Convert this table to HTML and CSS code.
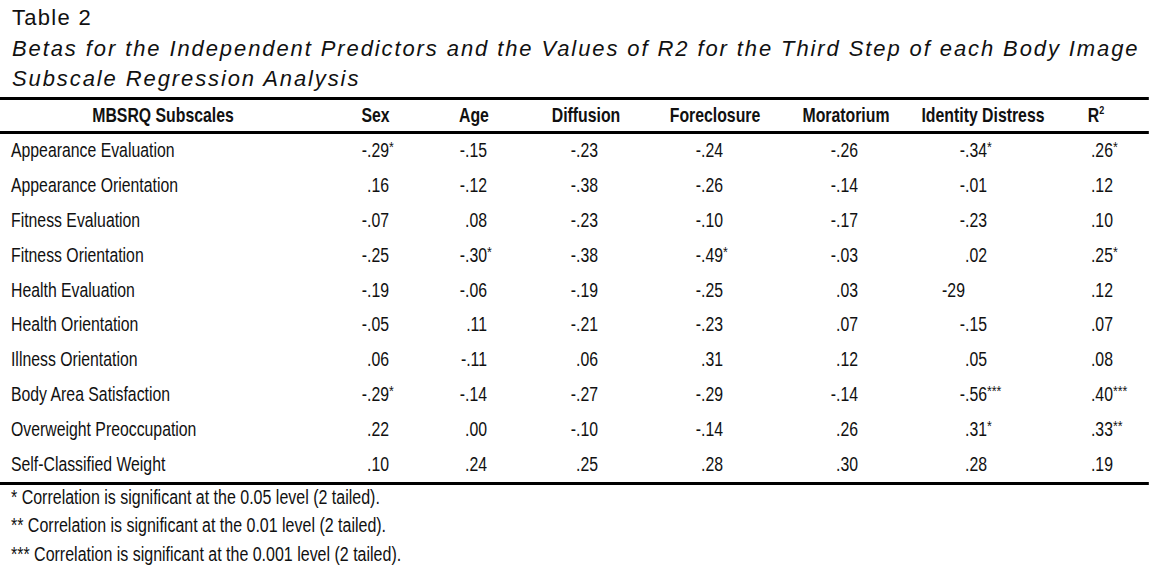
FILE: index.html
```html
<!DOCTYPE html>
<html>
<head>
<meta charset="utf-8">
<link rel="stylesheet" href="styles.css">
</head>
<body>
<div class="page">
  <div class="caption">
    <div class="tnum">Table 2</div>
    <div class="ttitle">Betas for the Independent Predictors and the Values of R2 for the Third Step of each Body Image Subscale Regression Analysis</div>
  </div>
  <div class="table">
    <div class="row head">
      <div class="c">MBSRQ Subscales</div>
      <div class="c">Sex</div>
      <div class="c">Age</div>
      <div class="c">Diffusion</div>
      <div class="c">Foreclosure</div>
      <div class="c">Moratorium</div>
      <div class="c">Identity Distress</div>
      <div class="c">R<sup>2</sup></div>
    </div>
    <div class="body">
      <div class="row"><div class="c">Appearance Evaluation</div><div class="c">-.29<span class="s">*</span></div><div class="c">-.15</div><div class="c">-.23</div><div class="c">-.24</div><div class="c">-.26</div><div class="c">-.34<span class="s">*</span></div><div class="c">.26<span class="s">*</span></div></div>
      <div class="row"><div class="c">Appearance Orientation</div><div class="c">.16</div><div class="c">-.12</div><div class="c">-.38</div><div class="c">-.26</div><div class="c">-.14</div><div class="c">-.01</div><div class="c">.12</div></div>
      <div class="row"><div class="c">Fitness Evaluation</div><div class="c">-.07</div><div class="c">.08</div><div class="c">-.23</div><div class="c">-.10</div><div class="c">-.17</div><div class="c">-.23</div><div class="c">.10</div></div>
      <div class="row"><div class="c">Fitness Orientation</div><div class="c">-.25</div><div class="c">-.30<span class="s">*</span></div><div class="c">-.38</div><div class="c">-.49<span class="s">*</span></div><div class="c">-.03</div><div class="c">.02</div><div class="c">.25<span class="s">*</span></div></div>
      <div class="row"><div class="c">Health Evaluation</div><div class="c">-.19</div><div class="c">-.06</div><div class="c">-.19</div><div class="c">-.25</div><div class="c">.03</div><div class="c shifted">-29</div><div class="c">.12</div></div>
      <div class="row"><div class="c">Health Orientation</div><div class="c">-.05</div><div class="c">.11</div><div class="c">-.21</div><div class="c">-.23</div><div class="c">.07</div><div class="c">-.15</div><div class="c">.07</div></div>
      <div class="row"><div class="c">Illness Orientation</div><div class="c">.06</div><div class="c">-.11</div><div class="c">.06</div><div class="c">.31</div><div class="c">.12</div><div class="c">.05</div><div class="c">.08</div></div>
      <div class="row"><div class="c">Body Area Satisfaction</div><div class="c">-.29<span class="s">*</span></div><div class="c">-.14</div><div class="c">-.27</div><div class="c">-.29</div><div class="c">-.14</div><div class="c">-.56<span class="s">***</span></div><div class="c">.40<span class="s">***</span></div></div>
      <div class="row"><div class="c">Overweight Preoccupation</div><div class="c">.22</div><div class="c">.00</div><div class="c">-.10</div><div class="c">-.14</div><div class="c">.26</div><div class="c">.31<span class="s">*</span></div><div class="c">.33<span class="s">**</span></div></div>
      <div class="row"><div class="c">Self-Classified Weight</div><div class="c">.10</div><div class="c">.24</div><div class="c">.25</div><div class="c">.28</div><div class="c">.30</div><div class="c">.28</div><div class="c">.19</div></div>
    </div>
  </div>
  <div class="notes">
    <div>* Correlation is significant at the 0.05 level (2 tailed).</div>
    <div>** Correlation is significant at the 0.01 level (2 tailed).</div>
    <div>*** Correlation is significant at the 0.001 level (2 tailed).</div>
  </div>
</div>
</body>
</html>
```

FILE: styles.css
```css
html, body {
  margin: 0;
  padding: 0;
  background: #fff;
}
body {
  color: #111;
  font-family: "Liberation Sans", Arial, sans-serif;
  width: 1149px;
  height: 582px;
  overflow: hidden;
}
.caption {
  padding: 3px 0 0 12px;
  font-size: 22px;
  line-height: 30.5px;
  height: 94px;
  letter-spacing: 1.9px;
}
.tnum {
  letter-spacing: 1.3px;
}
.ttitle {
  font-style: italic;
}
/* Arial Narrow is 82% of Arial's width: condense the table and notes */
.table,
.notes {
  width: 1401px;
  transform: scaleX(0.82);
  transform-origin: 0 0;
}
.table {
  border-top: 3px solid #000;
  border-bottom: 3px solid #000;
}
.row {
  display: grid;
  grid-template-columns: 397.6px 120.7px 119.5px 153.7px 161px 158.5px 175.6px 100px;
  font-size: 19.3px;
  height: 34.8px;
  align-items: center;
}
.row.head {
  height: 31px;
  font-weight: bold;
  border-bottom: 3px solid #000;
}
.head sup {
  font-size: 11px;
  vertical-align: 8px;
  line-height: 0;
}
.c {
  white-space: nowrap;
  text-align: right;
}
.row .c:first-child {
  text-align: left;
  padding-left: 13.4px;
}
.row .c:nth-child(2) { padding-right: 43.9px; }
.row .c:nth-child(3) { padding-right: 43.9px; }
.row .c:nth-child(4) { padding-right: 62.2px; }
.row .c:nth-child(5) { padding-right: 70.7px; }
.row .c:nth-child(6) { padding-right: 64.6px; }
.row .c:nth-child(7) { padding-right: 82.9px; }
.row .c:nth-child(8) { padding-right: 29.3px; }
.row .c.shifted { padding-right: 109.8px; }
.row.head .c,
.row.head .c:first-child {
  text-align: center;
  padding: 0;
}
.s {
  display: inline-block;
  width: 0;
  font-size: 15px;
  vertical-align: 5px;
  line-height: 0;
}
.notes {
  margin-top: -2px;
  padding-left: 13.4px;
  font-size: 19.5px;
  line-height: 28.5px;
}
```
